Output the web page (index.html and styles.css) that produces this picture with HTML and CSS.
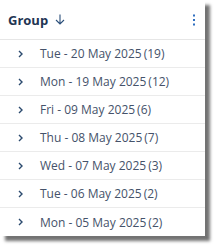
FILE: index.html
```html
<!DOCTYPE html>
<html>
<head>
<meta charset="utf-8">
<link rel="stylesheet" href="styles.css">
</head>
<body>
<div class="panel">
  <div class="header">
    <span class="title">Group</span>
    <svg class="sort" width="10" height="11" viewBox="0 0 10 11"><path d="M5 0.5V10M1 6l4 4 4-4" fill="none" stroke="#2b4f7a" stroke-width="1.1"/></svg>
    <span class="spacer"></span>
    <svg class="kebab" width="4" height="12" viewBox="0 0 4 12"><rect x="1" y="0.5" width="2" height="2" fill="#2f6fc0"/><rect x="1" y="5" width="2" height="2" fill="#2f6fc0"/><rect x="1" y="9.5" width="2" height="2" fill="#2f6fc0"/></svg>
  </div>
  <div class="row"><svg class="chev" width="6" height="8" viewBox="0 0 6 8"><path d="M1 1l3 3-3 3" fill="none" stroke="#2b4a6e" stroke-width="1.4"/></svg><span class="label">Tue - 20 May 2025</span><span class="count">(19)</span></div>
  <div class="row"><svg class="chev" width="6" height="8" viewBox="0 0 6 8"><path d="M1 1l3 3-3 3" fill="none" stroke="#2b4a6e" stroke-width="1.4"/></svg><span class="label">Mon - 19 May 2025</span><span class="count">(12)</span></div>
  <div class="row"><svg class="chev" width="6" height="8" viewBox="0 0 6 8"><path d="M1 1l3 3-3 3" fill="none" stroke="#2b4a6e" stroke-width="1.4"/></svg><span class="label">Fri - 09 May 2025</span><span class="count">(6)</span></div>
  <div class="row"><svg class="chev" width="6" height="8" viewBox="0 0 6 8"><path d="M1 1l3 3-3 3" fill="none" stroke="#2b4a6e" stroke-width="1.4"/></svg><span class="label">Thu - 08 May 2025</span><span class="count">(7)</span></div>
  <div class="row"><svg class="chev" width="6" height="8" viewBox="0 0 6 8"><path d="M1 1l3 3-3 3" fill="none" stroke="#2b4a6e" stroke-width="1.4"/></svg><span class="label">Wed - 07 May 2025</span><span class="count">(3)</span></div>
  <div class="row"><svg class="chev" width="6" height="8" viewBox="0 0 6 8"><path d="M1 1l3 3-3 3" fill="none" stroke="#2b4a6e" stroke-width="1.4"/></svg><span class="label">Tue - 06 May 2025</span><span class="count">(2)</span></div>
  <div class="row"><svg class="chev" width="6" height="8" viewBox="0 0 6 8"><path d="M1 1l3 3-3 3" fill="none" stroke="#2b4a6e" stroke-width="1.4"/></svg><span class="label">Mon - 05 May 2025</span><span class="count">(2)</span></div>
</div>
</body>
</html>
```
FILE: styles.css
```css
html, body {
  margin: 0;
  padding: 0;
  background: #ffffff;
}
body {
  font-family: "Open Sans", "Noto Sans", sans-serif;
  width: 217px;
  height: 249px;
  overflow: hidden;
}
.panel {
  width: 205px;
  background: #ffffff;
  box-shadow: 5px 5px 3px rgba(0, 0, 0, 0.55);
}
.header {
  display: flex;
  align-items: center;
  height: 39px;
  padding: 0 8px;
  border-bottom: 1px solid #e6e6e6;
}
.title {
  font-weight: 700;
  font-size: 13px;
  color: #1f3553;
}
.sort {
  margin-left: 7px;
}
.spacer {
  flex: 1;
}
.kebab {
  margin-right: 1px;
}
.row {
  display: flex;
  align-items: center;
  height: 27px;
  border-bottom: 1px solid #ebebeb;
  font-size: 12px;
  color: #45526a;
}
.row:last-child {
  border-bottom: none;
  height: 28px;
}
.chev {
  margin-left: 18px;
  margin-right: 16px;
}
.count {
  margin-left: 2px;
}
```
